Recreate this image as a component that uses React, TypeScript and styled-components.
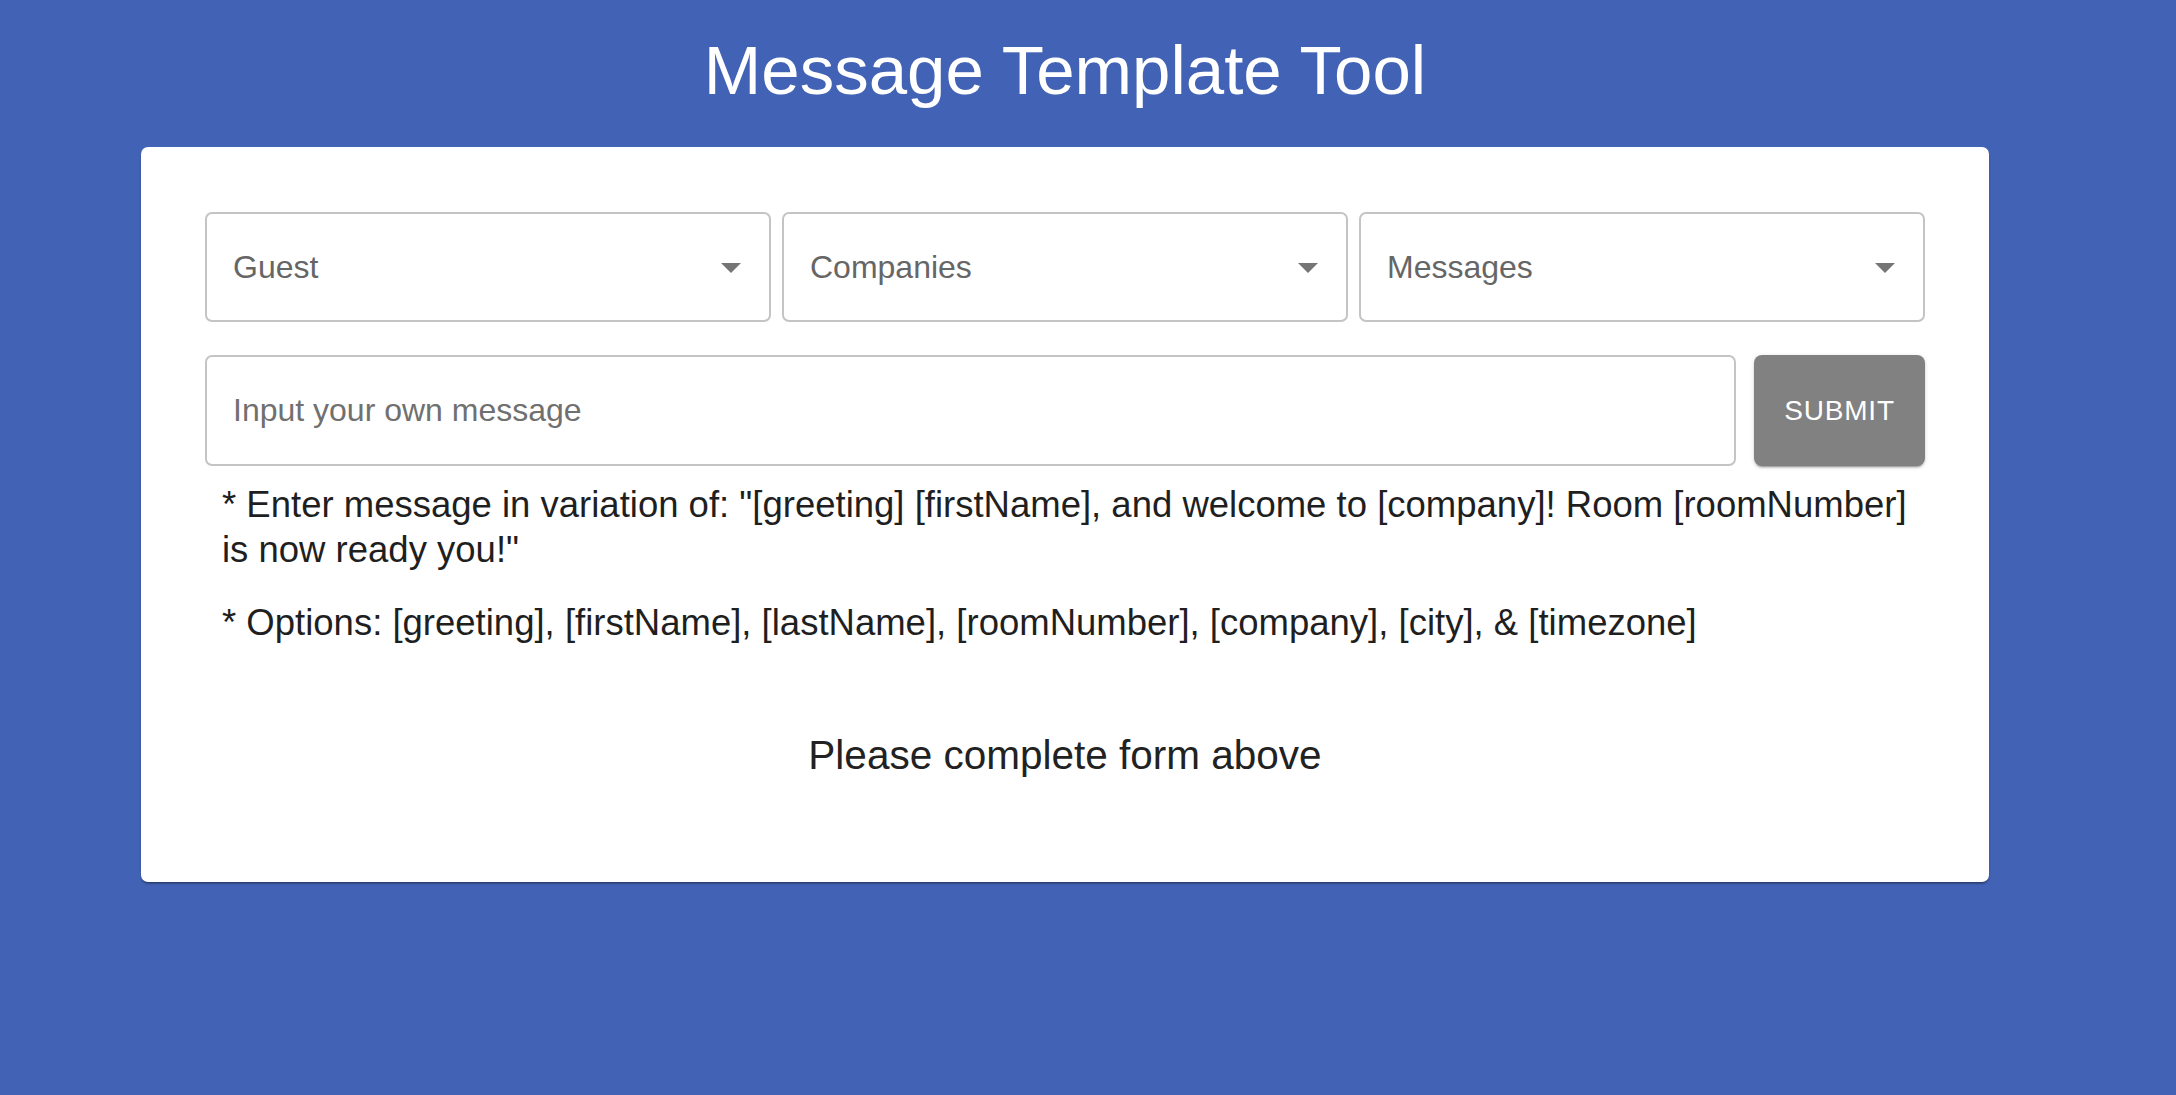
import styled, { createGlobalStyle } from 'styled-components';

const GlobalStyle = createGlobalStyle`
  html, body {
    margin: 0;
    padding: 0;
    background: #4262b5;
  }
  body {
    font-family: "Liberation Sans", Arial, sans-serif;
  }
`;

const Page = styled.div`
  min-height: 100vh;
  padding-right: 46px;
  display: flex;
  flex-direction: column;
  align-items: center;
  box-sizing: border-box;
`;

const Title = styled.h1`
  margin: 32px 0 38px;
  font-size: 69px;
  line-height: 77px;
  font-weight: 400;
  color: #ffffff;
`;

const Card = styled.div`
  width: 1848px;
  box-sizing: border-box;
  background: #ffffff;
  border-radius: 7px;
  padding: 65px 64px 95px;
  box-shadow: 0 2px 2px rgba(0, 0, 0, 0.25), 0 3px 1px -2px rgba(0, 0, 0, 0.2);
`;

const SelectRow = styled.div`
  display: grid;
  grid-template-columns: repeat(3, 1fr);
  gap: 11px;
`;

const Select = styled.div`
  height: 110px;
  box-sizing: border-box;
  border: 2px solid #c4c4c4;
  border-radius: 7px;
  display: flex;
  align-items: center;
  justify-content: space-between;
  padding: 0 26px 0 26px;
  font-size: 32px;
  color: #666666;
`;

const Arrow = styled.svg`
  width: 48px;
  height: 48px;
  margin-right: -12px;
  fill: #757575;
`;

const InputRow = styled.div`
  display: flex;
  gap: 18px;
  margin-top: 33px;
`;

const MessageInput = styled.input`
  flex: 1;
  height: 111px;
  box-sizing: border-box;
  border: 2px solid #c4c4c4;
  border-radius: 7px;
  padding: 0 26px;
  font-family: "Liberation Sans", Arial, sans-serif;
  font-size: 32px;
  color: #222;
  outline: none;
  &::placeholder {
    color: #707070;
  }
`;

const SubmitButton = styled.button`
  width: 171px;
  height: 111px;
  border: none;
  border-radius: 8px;
  background: #818181;
  color: #ffffff;
  font-family: "Liberation Sans", Arial, sans-serif;
  font-size: 28px;
  letter-spacing: 0.8px;
  text-transform: uppercase;
  box-shadow: 0 3px 1px -2px rgba(0, 0, 0, 0.2), 0 2px 2px rgba(0, 0, 0, 0.14),
    0 1px 5px rgba(0, 0, 0, 0.12);
`;

const Helper = styled.p<{ $top: number }>`
  margin: ${(p) => p.$top}px 0 0;
  padding: 0 0 0 17px;
  font-size: 36.5px;
  line-height: 45px;
  color: #1f1f1f;
`;

const Status = styled.h6`
  margin: 78px 0 0;
  text-align: center;
  font-size: 40.5px;
  line-height: 64px;
  font-weight: 400;
  color: #222222;
`;

const selects = ['Guest', 'Companies', 'Messages'];

function App() {
  return (
    <Page>
      <GlobalStyle />
      <Title>Message Template Tool</Title>
      <Card>
        <SelectRow>
          {selects.map((label) => (
            <Select key={label}>
              <span>{label}</span>
              <Arrow viewBox="0 0 24 24">
                <path d="M7 10l5 5 5-5z" />
              </Arrow>
            </Select>
          ))}
        </SelectRow>
        <InputRow>
          <MessageInput placeholder="Input your own message" />
          <SubmitButton>Submit</SubmitButton>
        </InputRow>
        <Helper $top={16}>
          * Enter message in variation of: "[greeting] [firstName], and welcome to [company]! Room
          [roomNumber] is now ready you!"
        </Helper>
        <Helper $top={28}>
          * Options: [greeting], [firstName], [lastName], [roomNumber], [company], [city], &amp;
          [timezone]
        </Helper>
        <Status>Please complete form above</Status>
      </Card>
    </Page>
  );
}

export default App;
